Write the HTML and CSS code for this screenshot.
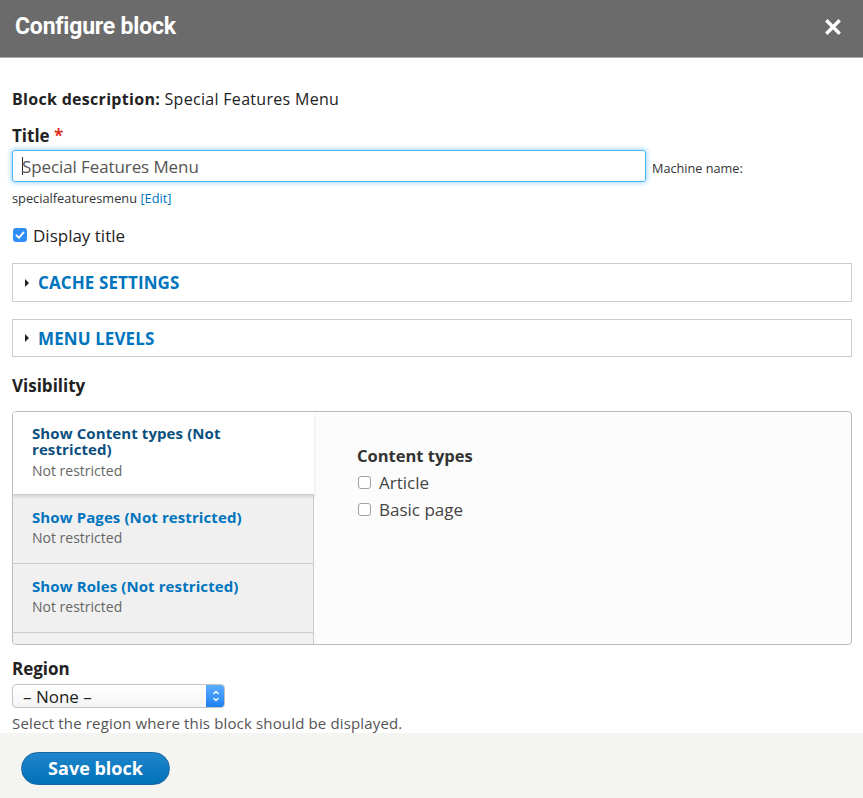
FILE: index.html
```html
<!DOCTYPE html>
<html>
<head>
<meta charset="utf-8">
<link rel="stylesheet" href="styles.css">
</head>
<body>
<div class="dialog">
  <header class="titlebar">
    <h1 class="dlg-title">Configure block</h1>
    <span class="close">
      <svg width="16" height="16" viewBox="0 0 16 16"><path d="M2.5 2.5 L13.5 13.5 M13.5 2.5 L2.5 13.5" stroke="#fff" stroke-width="3.4" stroke-linecap="square"/></svg>
    </span>
  </header>
  <main class="content">
    <p class="desc"><b>Block description:</b> Special Features Menu</p>
    <div class="field">
      <label class="lbl">Title <span class="req">*</span></label>
      <div class="title-row">
        <div class="text-input"><span class="caret"></span>Special Features Menu</div>
        <span class="machine">Machine name:</span>
      </div>
      <div class="machine-val">specialfeaturesmenu <a>[Edit]</a></div>
    </div>
    <div class="check-row">
      <span class="cb-checked"><svg width="14" height="14" viewBox="0 0 14 14"><path d="M3.4 7.3 L5.9 9.8 L10.6 4.4" fill="none" stroke="#fff" stroke-width="1.9" stroke-linecap="round" stroke-linejoin="round"/></svg></span>
      <span class="check-lbl">Display title</span>
    </div>
    <div class="details"><span class="tri"></span><span class="sum">CACHE SETTINGS</span></div>
    <div class="details second"><span class="tri"></span><span class="sum">MENU LEVELS</span></div>
    <div class="vis-lbl">Visibility</div>
    <div class="vtabs">
      <ul class="vtabs-menu">
        <li class="tab selected"><strong>Show Content types (Not restricted)</strong><span class="summary">Not restricted</span></li>
        <li class="tab"><strong>Show Pages (Not restricted)</strong><span class="summary">Not restricted</span></li>
        <li class="tab"><strong>Show Roles (Not restricted)</strong><span class="summary">Not restricted</span></li>
      </ul>
      <div class="vtabs-pane">
        <div class="pane-title">Content types</div>
        <div class="opt"><span class="cb"></span>Article</div>
        <div class="opt"><span class="cb"></span>Basic page</div>
      </div>
    </div>
    <div class="region-lbl">Region</div>
    <div class="select"><span class="sel-text">– None –</span><span class="stepper"><svg width="8" height="14" viewBox="0 0 8 14"><path d="M1.5 5 L4 2.5 L6.5 5 M1.5 9 L4 11.5 L6.5 9" fill="none" stroke="#fff" stroke-width="1.3"/></svg></span></div>
    <div class="help">Select the region where this block should be displayed.</div>
  </main>
  <footer class="buttons">
    <span class="btn">Save block</span>
  </footer>
</div>
</body>
</html>
```
FILE: styles.css
```css
* { box-sizing: border-box; }
html, body { margin: 0; padding: 0; }
body {
  width: 863px;
  height: 798px;
  overflow: hidden;
  background: #fff;
  font-family: "Open Sans", "Noto Sans", sans-serif;
  color: #222;
}
.dialog { display: flex; flex-direction: column; height: 798px; }
.titlebar {
  height: 58px;
  background: #6b6b6b;
  border-bottom: 1px solid #a9a9a9;
  display: flex;
  align-items: center;
  justify-content: space-between;
  padding: 0 22px 0 15px;
  flex: none;
}
.dlg-title {
  margin: 0;
  color: #fff;
  font-family: "Liberation Sans Narrow", "Roboto", sans-serif;
  font-weight: 700;
  font-size: 23px;
  letter-spacing: -0.2px;
  padding-bottom: 4px;
}
.close { display: flex; padding-bottom: 4px; }
.content { flex: 1; padding: 31px 11px 0 12px; overflow: hidden; }
.desc { margin: 0; font-size: 16px; letter-spacing: 0.3px; line-height: 20px; color: #222; }
.desc b { font-weight: 700; }
.field { margin-top: 17px; }
.lbl { display: block; font-weight: 700; font-size: 17px; line-height: 20px; color: #222; }
.req { color: #e0301e; }
.title-row { display: flex; align-items: center; margin-top: 4px; }
.text-input {
  width: 634px;
  height: 32px;
  border: 1px solid #4cb3f7;
  border-radius: 3px;
  box-shadow: 0 0 5px 1px #9ad6ff;
  padding: 0 9px;
  display: flex;
  align-items: center;
  font-size: 17px;
  letter-spacing: -0.1px;
  color: #555;
}
.caret { width: 1px; height: 18px; background: #333; margin-right: -1px; }
.machine { margin-left: 6px; font-size: 12.7px; color: #333; padding-top: 4px; }
.machine-val { font-size: 12.8px; color: #333; margin-top: 7px; line-height: 18px; }
.machine-val a { color: #0074bd; }
.check-row { display: flex; align-items: center; margin-top: 18px; height: 20px; }
.cb-checked {
  width: 14px; height: 14px;
  background: #2f8ef5;
  border-radius: 3px;
  display: flex; margin-left: 1px; margin-right: 6px;
}
.check-lbl { font-size: 17px; color: #222; }
.details {
  margin-top: 18px;
  height: 39px;
  border: 1px solid #ccc;
  display: flex;
  align-items: center;
  padding-left: 12px;
}
.details.second { margin-top: 17px; height: 38px; }
.tri {
  width: 0; height: 0;
  border-left: 4px solid #222;
  border-top: 4px solid transparent;
  border-bottom: 4px solid transparent;
  margin-right: 9px;
}
.sum { color: #0074bd; font-weight: 700; font-size: 17px; letter-spacing: 0.1px; }
.vis-lbl { margin-top: 19px; font-weight: 700; font-size: 17px; line-height: 20px; color: #222; }
.vtabs {
  margin-top: 15px;
  height: 234px;
  border: 1px solid #bbb;
  border-radius: 4px;
  display: flex;
  background: #fcfcfc;
  overflow: hidden;
}
.vtabs-menu {
  list-style: none;
  margin: 0; padding: 0;
  width: 301px;
  background: #f0f0f0;
  border-right: 1px solid #ccc;
  display: flex; flex-direction: column;
  flex: none;
}
.tab {
  padding: 14px 19px 0 19px;
  height: 69px;
  border-bottom: 1px solid #ccc;
  display: flex; flex-direction: column;
}
.tab strong { color: #0074bd; font-size: 15px; letter-spacing: 0.1px; line-height: 16px; font-weight: 700; }
.tab .summary { color: #666; font-size: 14px; line-height: 20px; margin-top: 3px; }
.tab.selected {
  background: #fff;
  height: 83px;
  margin-right: -1px;
  padding-top: 13px;
  border-bottom: 1px solid #ccc;
  box-shadow: 0 2px 3px rgba(0,0,0,0.12);
  position: relative;
  z-index: 1;
}
.tab.selected strong { color: #0a4f80; width: 200px; }
.tab.selected .summary { margin-top: 4px; }
.vtabs-pane { flex: 1; padding: 34px 0 0 43px; }
.pane-title { font-weight: 700; font-size: 16.5px; color: #333; line-height: 20px; }
.opt { display: flex; align-items: center; font-size: 17px; color: #444; margin-top: 6px; height: 20px; }
.opt + .opt { margin-top: 7px; }
.cb {
  width: 13px; height: 13px;
  border: 1px solid #a0a0a0;
  border-radius: 3px;
  background: #fff;
  margin-right: 8px; margin-left: 1px;
}
.region-lbl { margin-top: 14px; font-weight: 700; font-size: 17px; line-height: 20px; color: #222; }
.select {
  margin-top: 5px;
  width: 213px;
  height: 24px;
  border: 1px solid #c4c4c4;
  border-radius: 4px;
  background: linear-gradient(#fff, #f4f4f4);
  display: flex;
  align-items: center;
  justify-content: space-between;
  overflow: hidden;
}
.sel-text { font-size: 17px; color: #222; padding-left: 10px; }
.stepper {
  width: 19px; height: 24px;
  background: linear-gradient(#5fb0ff, #1b7ef0);
  display: flex; align-items: center; justify-content: center;
  margin-right: -1px;
}
.help { margin-top: 7px; font-size: 15px; letter-spacing: 0.15px; color: #555; line-height: 17px; }
.buttons {
  flex: none;
  height: 65px;
  background: #f4f4f1;
  padding: 19px 0 0 21px;
}
.btn {
  display: inline-flex;
  align-items: center;
  justify-content: center;
  width: 149px;
  height: 33px;
  border-radius: 17px;
  background: linear-gradient(#1f86cc, #0071b8);
  border: 1px solid #1764a0;
  color: #fff;
  font-weight: 700;
  font-size: 18px;
  padding-bottom: 1px;
}
```
